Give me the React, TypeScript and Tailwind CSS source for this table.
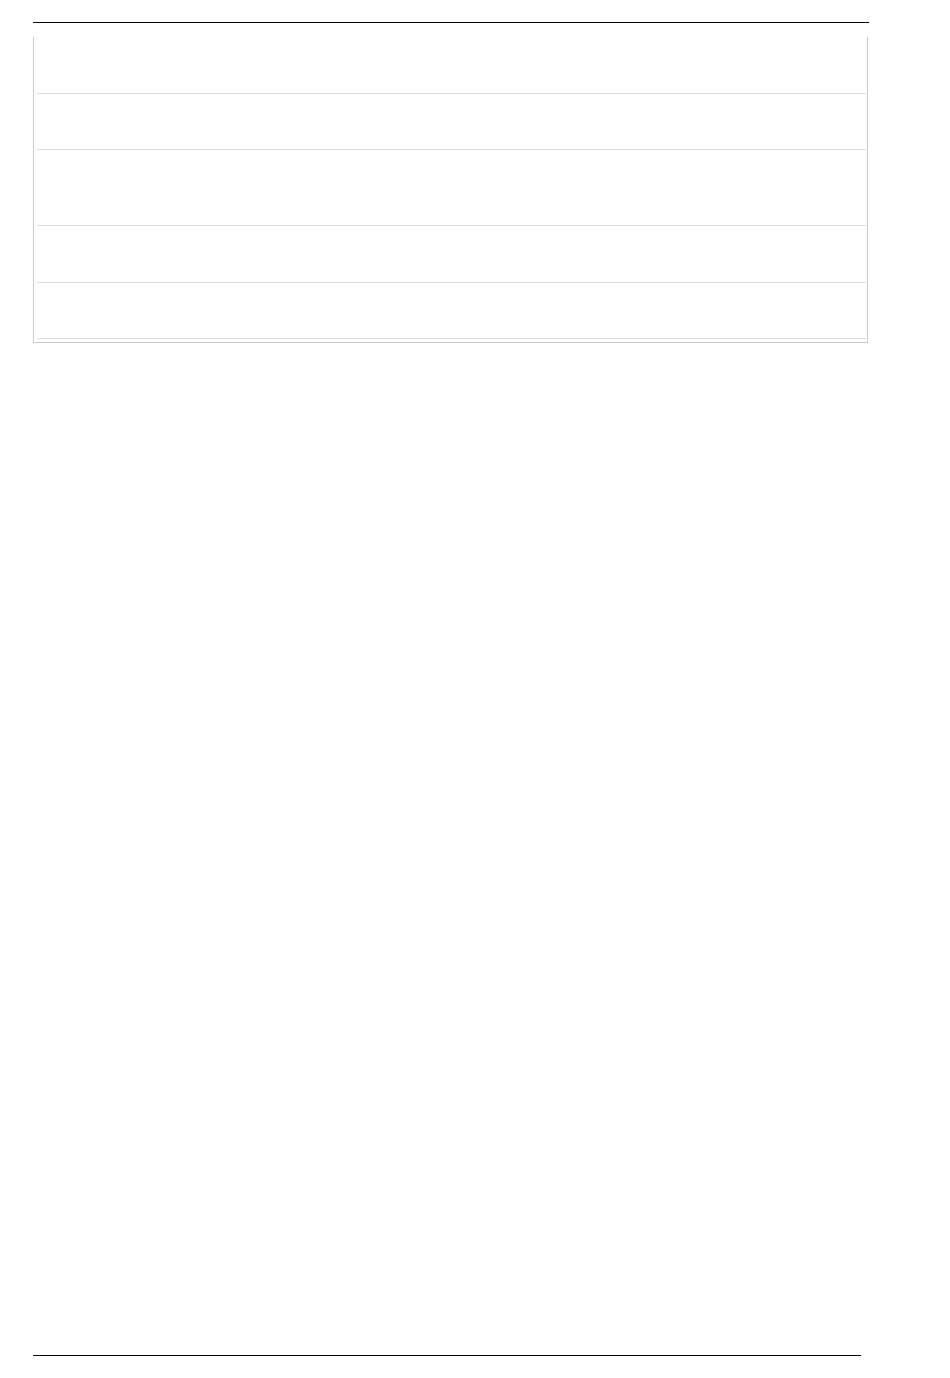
export default function App() {
  const rows = [57, 56, 76, 57, 56];
  return (
    <div className="w-[950px] h-[1378px] bg-white flex flex-col" style={{ fontFamily: '"Liberation Sans", Arial, sans-serif' }}>
      <div className="ml-[33px] mt-[22px] w-[836px] h-px bg-black" />
      <div className="ml-[33px] mt-[14px] w-[835px] border-l border-r border-b border-[#cccccc] pl-[3px] pr-px pb-[3px] flex flex-col">
        {rows.map((h, i) => (
          <div key={i} className={`border-b border-[#dddddd] ${h === 57 ? "h-[57px]" : h === 56 ? "h-[56px]" : "h-[76px]"}`} />
        ))}
      </div>
      <div className="flex-1" />
      <div className="ml-[33px] mb-[22px] w-[828px] h-px bg-black" />
    </div>
  );
}
